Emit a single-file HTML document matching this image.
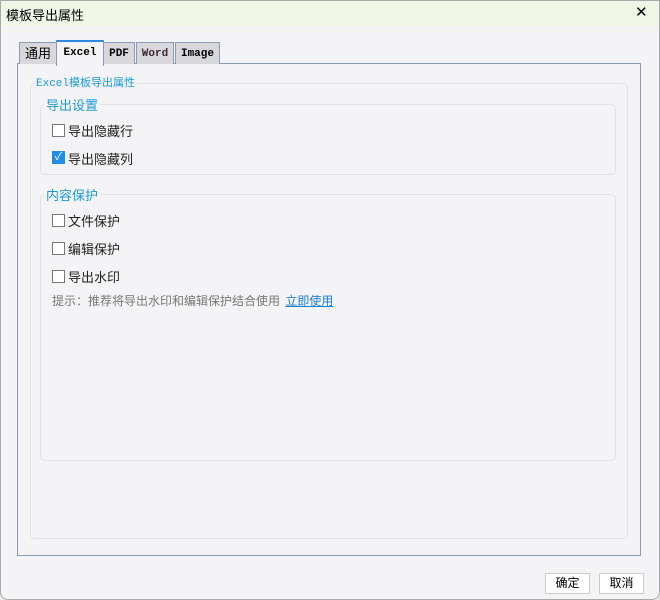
<!DOCTYPE html><html><head><style>
body{margin:0;width:660px;height:600px;background:#e8e8e8;font-family:"Liberation Sans","Noto Sans CJK SC",sans-serif;font-size:12px;position:relative;overflow:hidden}
.a{position:absolute}
.win{left:0;top:0;width:660px;height:600px;box-sizing:border-box;background:#f4f4f6;border:1px solid #aaa;border-radius:0 0 8px 8px;overflow:hidden}
.in{left:-1px;top:-1px;width:660px;height:600px}
.title{left:0;top:0;width:660px;height:26px;background:#f1f7e6}
.tab{top:42px;height:21px;background:#d8d8dc;border:1px solid #8c9bb5;border-bottom:none;font-family:"Liberation Mono","Noto Sans CJK SC",monospace;font-size:11px;font-weight:bold;text-align:center;line-height:22px}
.gb{border:1px solid #e2e2e6;border-radius:5px}
.lg{color:#1a9bd7;background:#f4f4f6;padding:0 2px}
.cb{width:11px;height:11px;border:1px solid #777;background:#fff}
.lab{font-size:13px;color:#222}
.btn{top:573px;height:19px;background:#fff;border:1px solid #ccc;text-align:center;line-height:19px;font-size:12px}
</style></head><body>
<div class="a win"><div class="a in">
<div class="a title"></div>
<div class="a" style="left:6px;top:5px;font-size:13px">模板导出属性</div>
<div class="a" style="left:635px;top:3px;font-size:15px;font-weight:300">✕</div>
<div class="a" style="left:17px;top:63px;width:622px;height:491px;border:1px solid #8c9bb5;background:#f4f4f6"></div>
<div class="a tab" style="left:19px;width:36px;font-weight:normal;font-family:'Liberation Sans','Noto Sans CJK SC',sans-serif;font-size:13px">通用</div>
<div class="a tab" style="left:56px;top:40px;height:24px;width:46px;background:#f4f4f6;border-top:2px solid #2c8ae0">Excel</div>
<div class="a tab" style="left:103px;width:30px">PDF</div>
<div class="a tab" style="left:136px;width:36px;color:#3a2a30">Word</div>
<div class="a tab" style="left:175px;width:43px">Image</div>
<div class="a gb" style="left:30px;top:83px;width:596px;height:454px"></div>
<div class="a lg" style="left:34px;top:74px;font-size:11px"><span style="font-family:'Liberation Mono',monospace">Excel</span>模板导出属性</div>
<div class="a gb" style="left:40px;top:104px;width:574px;height:69px"></div>
<div class="a lg" style="left:44px;top:95px;font-size:13px">导出设置</div>
<div class="a gb" style="left:40px;top:194px;width:574px;height:265px"></div>
<div class="a lg" style="left:44px;top:185px;font-size:13px">内容保护</div>
<div class="a cb" style="left:52px;top:124px"></div><div class="a lab" style="left:68px;top:121px">导出隐藏行</div>
<div class="a" style="left:52px;top:151px;width:13px;height:13px;background:#1e8ee8;color:#fff;font-size:11px;line-height:13px;text-align:center">✓</div><div class="a lab" style="left:68px;top:149px">导出隐藏列</div>
<div class="a cb" style="left:52px;top:214px"></div><div class="a lab" style="left:68px;top:211px">文件保护</div>
<div class="a cb" style="left:52px;top:242px"></div><div class="a lab" style="left:68px;top:239px">编辑保护</div>
<div class="a cb" style="left:52px;top:270px"></div><div class="a lab" style="left:68px;top:267px">导出水印</div>
<div class="a" style="left:52px;top:292px;color:#777">提示：推荐将导出水印和编辑保护结合使用 <span style="color:#1a7fd4;text-decoration:underline;margin-left:2px">立即使用</span></div>
<div class="a btn" style="left:545px;width:43px">确定</div>
<div class="a btn" style="left:599px;width:43px">取消</div>
</div></div>
</body></html>
